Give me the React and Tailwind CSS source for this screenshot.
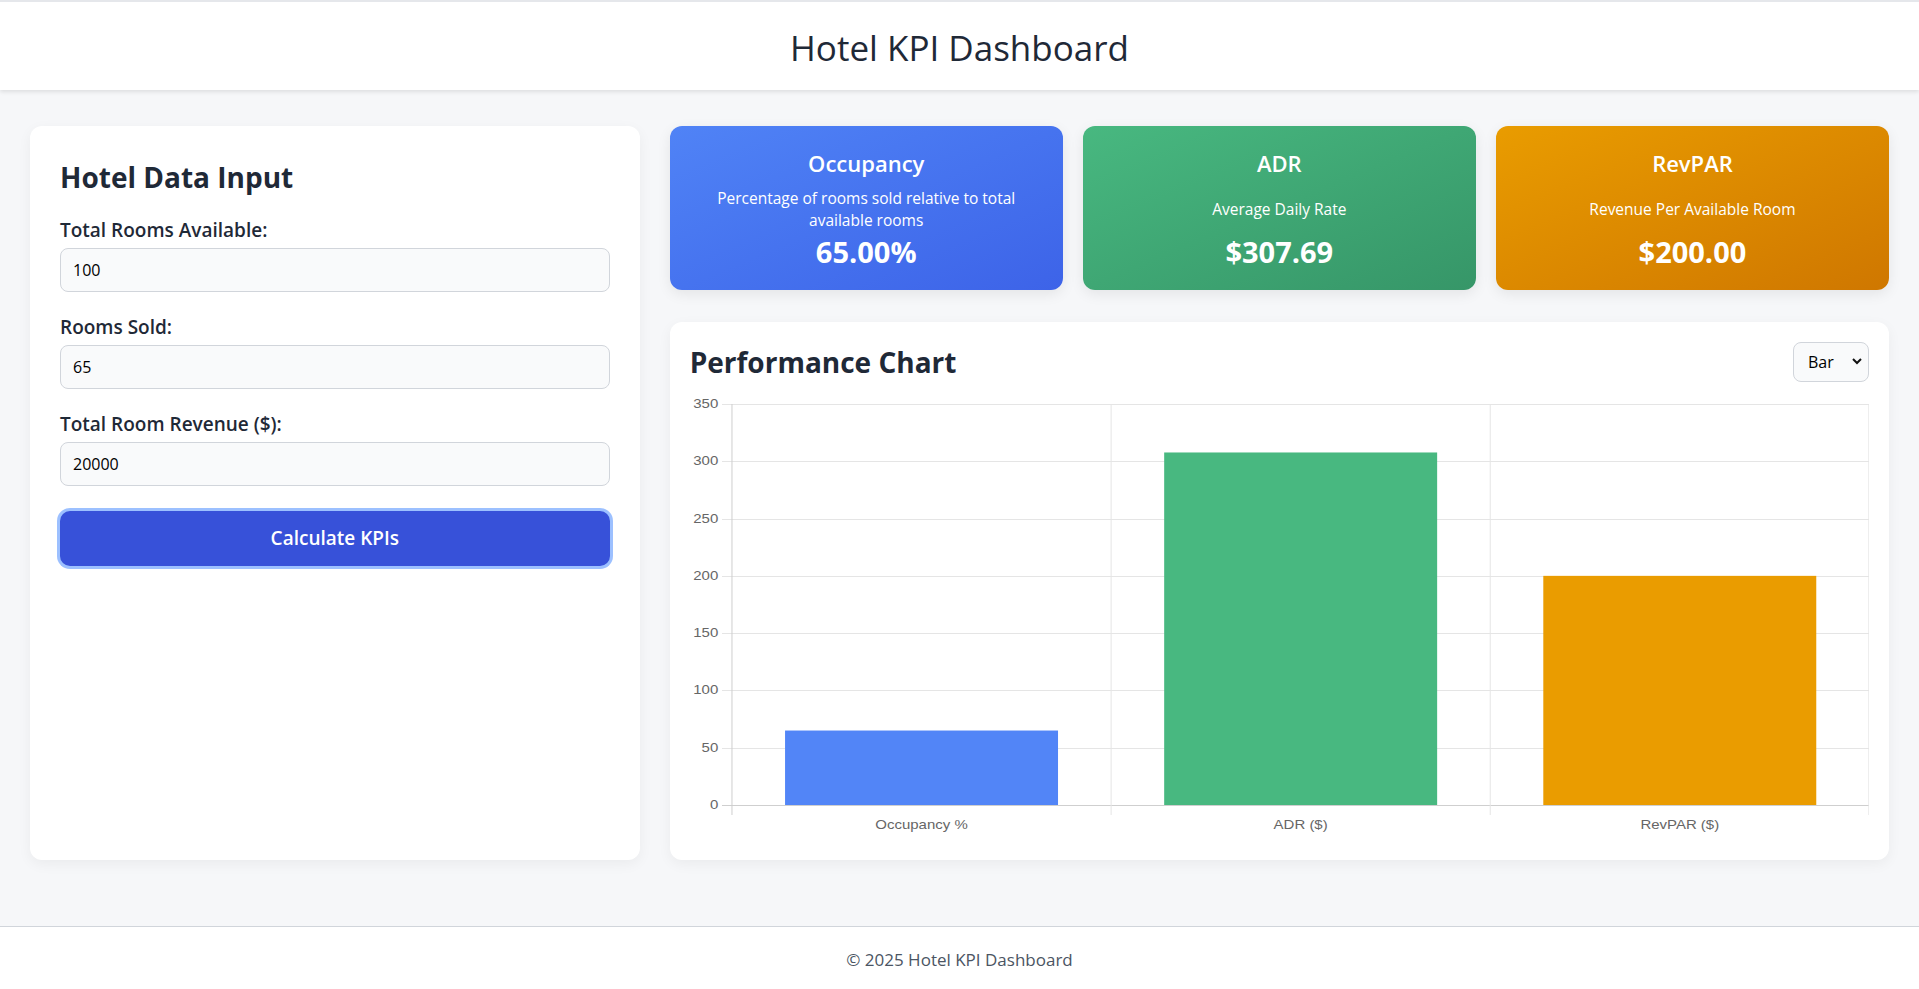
import React from "react";

const font = { fontFamily: "'Segoe UI', 'Open Sans', 'Noto Sans', sans-serif" };

const kpis = [
  {
    title: "Occupancy",
    desc: "Percentage of rooms sold relative to total available rooms",
    value: "65.00%",
    bg: "bg-linear-to-br from-[#5083f6] to-[#3d63e8]",
  },
  {
    title: "ADR",
    desc: "Average Daily Rate",
    value: "$307.69",
    bg: "bg-linear-to-br from-[#48b880] to-[#369668]",
  },
  {
    title: "RevPAR",
    desc: "Revenue Per Available Room",
    value: "$200.00",
    bg: "bg-linear-to-br from-[#e99c00] to-[#cf7700]",
  },
];

const bars = [
  { label: "Occupancy %", value: 65, color: "#5285f7" },
  { label: "ADR ($)", value: 307.69, color: "#48b880" },
  { label: "RevPAR ($)", value: 200, color: "#ea9c00" },
];

const Field = ({ label, value }) => (
  <div className="mb-[23px]">
    <label className="block text-[19px] leading-[24px] font-semibold text-[#1f2937] mb-[6px]">
      {label}
    </label>
    <input
      type="number"
      defaultValue={value}
      className="block w-full h-[44px] px-3 text-[16px] text-black bg-[#f9fafb] border border-[#d1d5db] rounded-lg outline-none"
      style={font}
    />
  </div>
);

// The chart canvas in the design is stretched sideways by about 1.25,
// so the viewBox is narrower than the drawn width.
const Chart = () => {
  const sx = 1.25;
  const W = 1180 / sx;
  const left = 42 / sx;
  const right = W;
  const top = 9;
  const bottom = 410;
  const max = 350;
  const yFor = v => top + ((max - v) / max) * (bottom - top);
  const catWidth = (right - left) / 3;
  const ticks = [0, 50, 100, 150, 200, 250, 300, 350];
  const labelFont = "'Liberation Sans', Arial, sans-serif";

  return (
    <svg width="100%" height="445" viewBox={`0 0 ${W} 445`} preserveAspectRatio="none" className="block">
      {ticks.map(t => {
        const y = Math.round(yFor(t)) + 0.5;
        return (
          <g key={t}>
            <line
              x1={left - 8}
              x2={right}
              y1={y}
              y2={y}
              stroke={t === 0 ? "#cfcfcf" : "#e5e5e5"}
              strokeWidth="1"
              vectorEffect="non-scaling-stroke"
            />
            <text
              x={left - 11}
              y={y}
              textAnchor="end"
              dominantBaseline="middle"
              fontSize="12"
              fill="#666"
              fontFamily={labelFont}
            >
              {t}
            </text>
          </g>
        );
      })}
      {[0, 1, 2, 3].map(i => {
        const x = left + catWidth * i - (i === 3 ? 0.4 : 0);
        return (
          <line
            key={i}
            x1={x}
            x2={x}
            y1={top}
            y2={bottom + 10}
            stroke={i === 0 ? "#cfcfcf" : "#e5e5e5"}
            strokeWidth="1"
            vectorEffect="non-scaling-stroke"
          />
        );
      })}
      {bars.map((b, i) => {
        const w = catWidth * 0.72;
        const cx = left + catWidth * (i + 0.5);
        const y = yFor(b.value);
        return (
          <g key={b.label}>
            <rect x={cx - w / 2} y={y} width={w} height={bottom - y} fill={b.color} />
            <text
              x={cx}
              y={431}
              textAnchor="middle"
              dominantBaseline="middle"
              fontSize="12"
              fill="#666"
              fontFamily={labelFont}
            >
              {b.label}
            </text>
          </g>
        );
      })}
    </svg>
  );
};

export default function App() {
  return (
    <div className="bg-[#f6f7f9] text-[#1f2937]" style={font}>
      <header className="bg-white border-t-2 border-[#e5e7eb] h-[90px] pt-1 flex items-center justify-center shadow-[0_2px_4px_rgba(0,0,0,0.1)] relative">
        <h1 className="text-[35px] leading-[42px] font-normal text-[#1f2937]">Hotel KPI Dashboard</h1>
      </header>

      <main className="px-[30px] pt-9 pb-[66px]">
        <div className="grid grid-cols-[1fr_2fr] gap-[30px]">
          <div className="bg-white rounded-xl shadow-[0_4px_14px_rgba(0,0,0,0.05)] p-[30px]">
            <h2 className="text-[28px] leading-[43px] font-bold mb-[19px]">Hotel Data Input</h2>
            <Field label="Total Rooms Available:" value={100} />
            <Field label="Rooms Sold:" value={65} />
            <Field label="Total Room Revenue ($):" value={20000} />
            <button
              className="mt-[2px] w-full h-[55px] rounded-[10px] bg-[#3751d9] text-white text-[19px] font-semibold ring-[3px] ring-[#9cc0ff]"
              style={font}
            >
              Calculate KPIs
            </button>
          </div>

          <div className="flex flex-col gap-8 min-w-0">
            <div className="grid grid-cols-3 gap-5">
              {kpis.map(k => (
                <div
                  key={k.title}
                  className={`${k.bg} rounded-xl text-white text-center px-6 pt-6 pb-5 flex flex-col items-center shadow-[0_4px_14px_rgba(0,0,0,0.08)]`}
                >
                  <div className="text-[22px] leading-[26px] font-semibold">{k.title}</div>
                  <div className="flex-1 mt-[11px] mb-[3px] flex items-center justify-center">
                    <p className="text-[15.5px] leading-[22px]">{k.desc}</p>
                  </div>
                  <div className="text-[29px] leading-[36px] font-bold">{k.value}</div>
                </div>
              ))}
            </div>

            <div className="bg-white rounded-xl shadow-[0_4px_14px_rgba(0,0,0,0.05)] p-5">
              <div className="flex items-center justify-between h-10">
                <h2 className="text-[28px] leading-[40px] font-bold">Performance Chart</h2>
                <div className="relative">
                  <select
                    defaultValue="bar"
                    className="appearance-none h-10 w-[76px] pl-[14px] pr-6 text-[16px] text-black bg-[#f9fafb] border border-[#d1d5db] rounded-lg outline-none"
                    style={font}
                  >
                    <option value="bar">Bar</option>
                    <option value="line">Line</option>
                  </select>
                  <svg
                    className="absolute right-[7px] top-[16px] pointer-events-none"
                    width="10"
                    height="7"
                    viewBox="0 0 10 7"
                  >
                    <polyline points="1,1 5,5 9,1" fill="none" stroke="#111" strokeWidth="2" />
                  </svg>
                </div>
              </div>
              <div className="mt-[13px]">
                <Chart />
              </div>
            </div>
          </div>
        </div>
      </main>

      <footer className="bg-white border-t border-[#d1d5db] pt-[21px] pb-[17px] text-center text-[17px] leading-[24px] text-[#4b5563]">
        © 2025 Hotel KPI Dashboard
      </footer>
    </div>
  );
}
